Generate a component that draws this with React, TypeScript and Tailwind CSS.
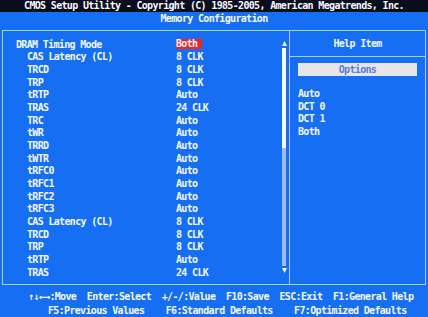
import React from "react";

type Row = { label: string; value: string; sub?: boolean; active?: boolean };

const rows: Row[] = [
  { label: "DRAM Timing Mode", value: "Both", active: true },
  { label: "CAS Latency (CL)", value: "8 CLK", sub: true },
  { label: "TRCD", value: "8 CLK", sub: true },
  { label: "TRP", value: "8 CLK", sub: true },
  { label: "tRTP", value: "Auto", sub: true },
  { label: "TRAS", value: "24 CLK", sub: true },
  { label: "TRC", value: "Auto", sub: true },
  { label: "tWR", value: "Auto", sub: true },
  { label: "TRRD", value: "Auto", sub: true },
  { label: "tWTR", value: "Auto", sub: true },
  { label: "tRFC0", value: "Auto", sub: true },
  { label: "tRFC1", value: "Auto", sub: true },
  { label: "tRFC2", value: "Auto", sub: true },
  { label: "tRFC3", value: "Auto", sub: true },
  { label: "CAS Latency (CL)", value: "8 CLK", sub: true },
  { label: "TRCD", value: "8 CLK", sub: true },
  { label: "TRP", value: "8 CLK", sub: true },
  { label: "tRTP", value: "Auto", sub: true },
  { label: "TRAS", value: "24 CLK", sub: true },
];

const options = ["Auto", "DCT 0", "DCT 1", "Both"];

const Arrow = ({ down }: { down?: boolean }) => (
  <svg width="5" height="5" viewBox="0 0 5 5" className="block">
    <polygon points={down ? "0,0 5,0 2.5,5" : "2.5,0 5,5 0,5"} fill="#f4f8ff" />
  </svg>
);

const App = () => {
  return (
    <div
      className="flex h-[317px] w-[428px] flex-col overflow-hidden bg-[#166ff3] text-[10px] font-bold tracking-[-0.67px] text-[#f4f8ff]"
      style={{ fontFamily: '"DejaVu Sans Mono", "Liberation Mono", monospace' }}
    >
      <div className="h-[12px] shrink-0 bg-[#0a0d1c] text-center leading-[12px] whitespace-pre">
        CMOS Setup Utility - Copyright (C) 1985-2005, American Megatrends, Inc.
      </div>
      <div className="h-[18px] shrink-0 text-center leading-[14px]">Memory Configuration</div>

      <div className="mx-[2px] flex h-[255px] shrink-0 border border-[#a9cdfb]">
        {/* settings list + scrollbar */}
        <div className="flex w-[287px] border-r border-[#a9cdfb]">
          <div className="flex-1 pl-[13px] pt-[7px]">
            {rows.map((r, i) => (
              <div key={i} className="flex h-[12.67px] items-center whitespace-pre">
                <div className={r.sub ? "w-[160px] pl-[11px]" : "w-[160px]"}>{r.label}</div>
                <div className={r.active ? "bg-[#ee2424] pr-[5px] leading-[10px]" : ""}>{r.value}</div>
              </div>
            ))}
          </div>
          <div className="mr-[3px] flex w-[4px] flex-col items-center pt-[10px]">
            <Arrow />
            <div className="mt-[2px] h-[100px] w-[4px] bg-[#f4f8ff]" />
            <div className="h-[118px] w-[4px] bg-[#9dbdf0]" />
            <div className="mt-[2px]">
              <Arrow down />
            </div>
          </div>
        </div>

        {/* help panel */}
        <div className="flex flex-1 flex-col">
          <div className="h-[26px] border-b border-[#a9cdfb] text-center leading-[26px]">Help Item</div>
          <div className="mx-[8px] mt-[6px] h-[13px] bg-[#e8e4ea] text-center leading-[13px] text-[#5a7fd8]">
            Options
          </div>
          <div className="mt-[12px] pl-[8px]">
            {options.map((o) => (
              <div key={o} className="h-[12.67px] leading-[12.67px] whitespace-pre">
                {o}
              </div>
            ))}
          </div>
        </div>
      </div>

      <div className="pt-[5px] leading-[14px] whitespace-pre">
        <div className="pl-[28px]">↑↓←→:Move  Enter:Select  +/-/:Value  F10:Save  ESC:Exit  F1:General Help</div>
        <div className="pl-[48px]">F5:Previous Values    F6:Standard Defaults    F7:Optimized Defaults</div>
      </div>
    </div>
  );
};

export default App;
